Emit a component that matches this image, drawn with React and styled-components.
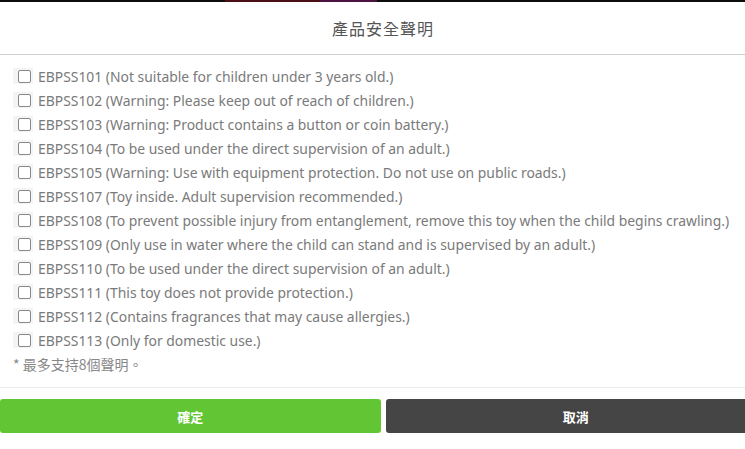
import React from 'react';
import styled, { createGlobalStyle } from 'styled-components';

const GlobalStyle = createGlobalStyle`
  html, body {
    margin: 0;
    padding: 0;
    background: #fff;
    overflow: hidden;
  }
  body {
    font-family: "Noto Sans", "Noto Sans CJK TC", sans-serif;
  }
`;

const Modal = styled.div`
  width: 766px;
`;

const TopStrip = styled.div`
  height: 2px;
  background: linear-gradient(
    to right,
    #0d0d0d 0,
    #0d0d0d 225px,
    #4a0f16 225px,
    #4a0f16 320px,
    #4b1240 320px,
    #4b1240 377px,
    #0d0d0d 377px
  );
`;

const Header = styled.div`
  height: 52px;
  display: flex;
  align-items: center;
  justify-content: center;
  border-bottom: 1px solid #d0d0d0;
  font-family: "Noto Sans CJK TC", sans-serif;
  font-size: 16px;
  letter-spacing: 1px;
  color: #555;
`;

const List = styled.div`
  padding: 9px 0 0 13px;
`;

const Row = styled.label`
  display: flex;
  align-items: center;
  height: 24px;
  gap: 5px;
  font-family: "Noto Sans", "Noto Sans CJK TC", sans-serif;
  font-size: 13.9px;
  color: #7a7a7a;
  white-space: nowrap;
`;

const BoxWrap = styled.span`
  width: 20px;
  height: 16px;
  background: #f4f4f4;
  display: flex;
  align-items: center;
  justify-content: flex-end;
`;

const Box = styled.span`
  width: 11px;
  height: 11px;
  border: 1px solid #8a8a8a;
  border-radius: 2px;
  background: #fff;
  margin-right: 2px;
`;

const Note = styled.div`
  height: 24px;
  display: flex;
  align-items: center;
  font-family: "Noto Sans CJK TC", sans-serif;
  font-size: 14px;
  color: #888;
`;

const Footer = styled.div`
  margin-top: 11px;
  border-top: 1px solid #ebebeb;
  padding-top: 11px;
  display: flex;
  gap: 5px;
`;

const Button = styled.button`
  flex: 1;
  height: 34px;
  border: none;
  border-radius: 3px;
  background: ${p => p.$bg};
  color: #fff;
  font-family: "Noto Sans CJK TC", sans-serif;
  font-size: 13px;
  font-weight: 600;
  cursor: pointer;
`;

const items = [
  'EBPSS101 (Not suitable for children under 3 years old.)',
  'EBPSS102 (Warning: Please keep out of reach of children.)',
  'EBPSS103 (Warning: Product contains a button or coin battery.)',
  'EBPSS104 (To be used under the direct supervision of an adult.)',
  'EBPSS105 (Warning: Use with equipment protection. Do not use on public roads.)',
  'EBPSS107 (Toy inside. Adult supervision recommended.)',
  'EBPSS108 (To prevent possible injury from entanglement, remove this toy when the child begins crawling.)',
  'EBPSS109 (Only use in water where the child can stand and is supervised by an adult.)',
  'EBPSS110 (To be used under the direct supervision of an adult.)',
  'EBPSS111 (This toy does not provide protection.)',
  'EBPSS112 (Contains fragrances that may cause allergies.)',
  'EBPSS113 (Only for domestic use.)',
];

export default function App() {
  return (
    <Modal>
      <GlobalStyle />
      <TopStrip />
      <Header>產品安全聲明</Header>
      <List>
        {items.map(t => (
          <Row key={t}>
            <BoxWrap><Box /></BoxWrap>
            {t}
          </Row>
        ))}
        <Note>* 最多支持8個聲明。</Note>
      </List>
      <Footer>
        <Button $bg="#62c634">確定</Button>
        <Button $bg="#454545">取消</Button>
      </Footer>
    </Modal>
  );
}
